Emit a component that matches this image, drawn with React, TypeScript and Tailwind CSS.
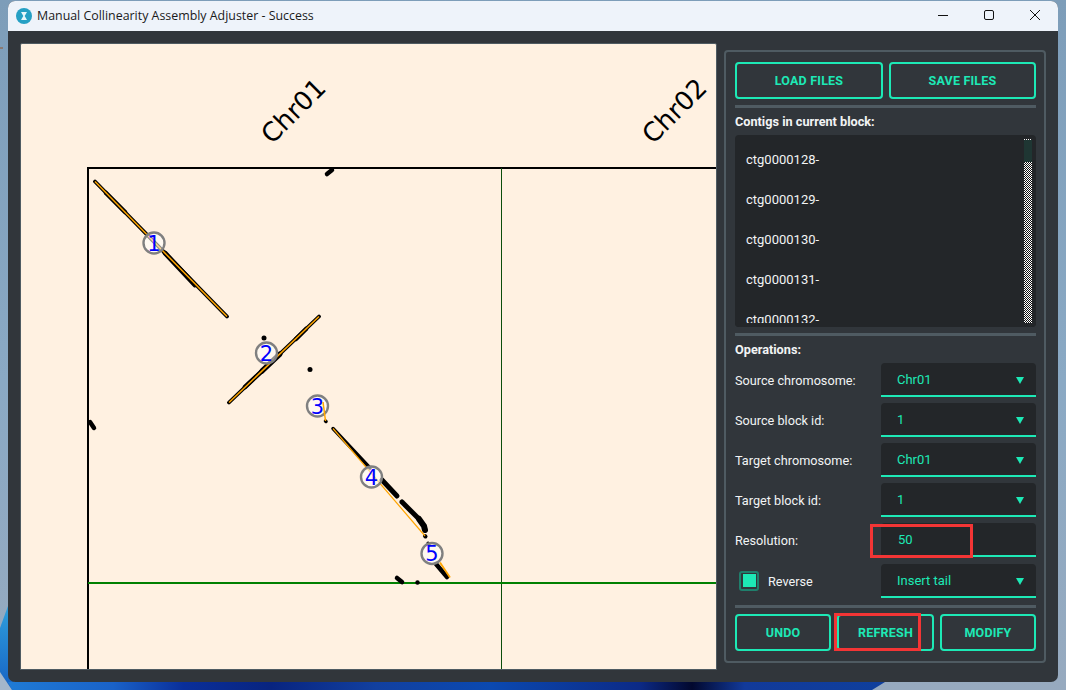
import { useState } from 'react'

const contigs = ['ctg0000128-', 'ctg0000129-', 'ctg0000130-', 'ctg0000131-', 'ctg0000132-']

function ActionButton({ label, className }: { label: string; className: string }) {
  return (
    <button className={`h-[37px] rounded-[4px] border-2 border-[#1de9b6] pt-[2px] font-['Roboto',sans-serif] text-[12.5px] font-bold tracking-[0.2px] text-[#1de9b6] ${className}`}>
      {label}
    </button>
  )
}

function Divider() {
  return <div className="h-[3px] bg-[#4f5b62]" />
}

function Select({ value }: { value: string }) {
  return (
    <div className="flex h-[34px] w-[155px] items-center justify-between rounded-t-[4px] border-b-2 border-[#1de9b6] bg-[#232629] pt-[2px] pl-4 pr-[12px] text-[13px] text-[#1de9b6]">
      <span>{value}</span>
      <svg width="8" height="7" viewBox="0 0 8 7"><path d="M0 0h8L4 7z" fill="#1de9b6" /></svg>
    </div>
  )
}

function FieldRow({ label, value }: { label: string; value: string }) {
  return (
    <div className="flex items-center justify-between">
      <span className="pt-[2px] text-[12.7px] text-[#f2f4f5]">{label}</span>
      <Select value={value} />
    </div>
  )
}

function Plot() {
  return (
    <svg width="697" height="627" viewBox="20 43 697 627" className="block" fontFamily="'DejaVu Sans', sans-serif">
      <text x="272" y="145" fontSize="26" transform="rotate(-45 272 145)" fill="#000">Chr01</text>
      <text x="653" y="145" fontSize="26" transform="rotate(-45 653 145)" fill="#000">Chr02</text>

      <path d="M88 670V168H717" fill="none" stroke="#000" strokeWidth="2" />
      <path d="M501.500 168V670" stroke="#0b4d0b" strokeWidth="1" />
      <path d="M88 583H717" stroke="#008000" strokeWidth="2" />

      {/* black dot traces */}
      <g stroke="#000" fill="none" strokeLinecap="round">
        <path d="M95 181.500L227 316.500" strokeWidth="3.800" />
        <path d="M106 193L125 212" strokeWidth="4.500" />
        <path d="M165 253L195 285" strokeWidth="4.800" />
        <path d="M229 402.500L319 316.500" strokeWidth="3.800" />
        <path d="M245 387L262 371" strokeWidth="4.500" />
        <path d="M262 371L280 354" strokeWidth="5.200" />
        <path d="M296 339L306 329" strokeWidth="4.500" />
        <path d="M333 428.500L370 468" strokeWidth="3.500" />
        <path d="M382 480L397 496" strokeWidth="5" />
        <path d="M402 502L417 517" strokeWidth="5" />
        <path d="M419 519L424 526L425 530" strokeWidth="6" />
        <path d="M425 536L425.500 536.500" strokeWidth="4" />
        <path d="M428 543L429 545" strokeWidth="3" />
        <path d="M436 564L447 577" strokeWidth="4.500" />
        <path d="M327 174L332 170" strokeWidth="4.500" />
        <path d="M90 422L94 428" strokeWidth="4.500" />
        <path d="M397 578L402 582" strokeWidth="4.500" />
        <path d="M325.500 421L326 421.500" strokeWidth="3.500" />
      </g>
      <g fill="#000">
        <circle cx="264" cy="338" r="2.500" />
        <circle cx="310" cy="369.500" r="2.500" />
        <circle cx="417.500" cy="582.500" r="2.200" />
      </g>

      {/* orange fitted lines */}
      <g stroke="#ffa500" fill="none">
        <path d="M95 181.500L227 316.500" strokeWidth="1.500" />
        <path d="M229 402.500L319 316.500" strokeWidth="1.500" />
        <path d="M333 428.500L425 536" strokeWidth="1.200" />
        <path d="M440 562.500L450 577.500" strokeWidth="1.800" />
      </g>

      {/* block markers */}
      {[
        { n: 1, x: 154, y: 243 },
        { n: 2, x: 266.500, y: 353 },
        { n: 3, x: 317.500, y: 406 },
        { n: 4, x: 371.500, y: 477 },
        { n: 5, x: 432, y: 553.500 },
      ].map((m) => (
        <g key={m.n}>
          <circle cx={m.x} cy={m.y} r="10.500" fill="#ffffff" fillOpacity="0.55" stroke="#808080" strokeWidth="2.400" />
          <text x={m.x} y={m.y + 7.500} fontSize="21" fill="#0000ff" textAnchor="middle">{m.n}</text>
        </g>
      ))}
      <path d="M323 402L325.500 421" stroke="#ffa500" strokeWidth="1.500" fill="none" />
    </svg>
  )
}

export default function App() {
  const [reverse] = useState(true)

  return (
    <div className="relative h-[690px] w-[1066px] overflow-hidden bg-[linear-gradient(180deg,#7d9db9_0%,#8aa9c4_55%,#97aabf_100%)] pl-2 pt-px">
      {/* desktop wallpaper peeking out under the window */}
      <svg className="absolute inset-0" width="1066" height="690" viewBox="0 0 1066 690">
        <defs>
          <linearGradient id="edge" x1="0" y1="0" x2="0" y2="1">
            <stop offset="0" stopColor="#2f9fdc" />
            <stop offset="1" stopColor="#1662c4" />
          </linearGradient>
          <linearGradient id="strip" x1="0" y1="0" x2="1" y2="0">
            <stop offset="0" stopColor="#1f7bd6" />
            <stop offset="0.12" stopColor="#1a62c8" />
            <stop offset="0.2" stopColor="#0a2f9a" />
            <stop offset="0.3" stopColor="#08247f" />
            <stop offset="0.42" stopColor="#12409f" />
            <stop offset="0.55" stopColor="#0b49b0" />
            <stop offset="0.72" stopColor="#0c2a86" />
            <stop offset="0.78" stopColor="#02082e" />
            <stop offset="0.84" stopColor="#123a9a" />
            <stop offset="1" stopColor="#0f3f9c" />
          </linearGradient>
        </defs>
        <path d="M0 628L8 606H14V690H0z" fill="url(#edge)" />
        <path d="M8 682H885L872 690H12z" fill="url(#strip)" />
        <path d="M0 672L12 690H0z" fill="#a3b6cb" />
        <path d="M0 47h3v2H0z" fill="#8a7a72" />
      </svg>

      <div className="relative flex h-[681px] w-[1050px] flex-col overflow-hidden rounded-[7px] bg-[#31363b] font-['Roboto',sans-serif]">
        {/* title bar */}
        <div className="flex h-[30px] shrink-0 items-center bg-[#eef3fa] pl-2">
          <svg width="16" height="16" viewBox="0 0 16 16">
            <circle cx="8" cy="8" r="8" fill="#25a0c4" />
            <path d="M5 4h6L8.700 8 11 12H5l2.300-4z" fill="#e6f6fa" />
          </svg>
          <span className="ml-[5px] font-['Open_Sans',sans-serif] text-[12.4px] text-[#1a1a1a]">
            Manual Collinearity Assembly Adjuster - Success
          </span>
          <div className="ml-auto flex items-center">
            <svg width="46" height="30" viewBox="0 0 46 30"><path d="M18 14.500h10" stroke="#111" strokeWidth="1" /></svg>
            <svg width="46" height="30" viewBox="0 0 46 30"><rect x="18.500" y="9.500" width="9" height="9" rx="1.500" fill="none" stroke="#111" strokeWidth="1" /></svg>
            <svg width="46" height="30" viewBox="0 0 46 30"><path d="M18 9l10 10M28 9l-10 10" stroke="#111" strokeWidth="1" /></svg>
          </div>
        </div>

        {/* body */}
        <div className="flex min-h-0 flex-1 items-start pl-3 pt-3">
          <div className="h-[627px] w-[697px] overflow-hidden rounded-t-[2px] border-x border-y border-[#4f5b62] bg-[#fff1e1]">
            <div className="-m-px"><Plot /></div>
          </div>

          <div className="relative ml-[7px] mt-[7px] flex h-[613px] w-[322px] flex-col rounded-[4px] border-2 border-[#4f5b62] pl-[9px] pr-2 pt-[10px] text-[#f2f4f5]">
            <div className="flex gap-[6px]">
              <ActionButton label="LOAD FILES" className="w-[148px]" />
              <ActionButton label="SAVE FILES" className="w-[147px]" />
            </div>
            <div className="mt-[6px]"><Divider /></div>
            <div className="mt-[6px] text-[12.7px] leading-[15px] font-bold">Contigs in current block:</div>
            <div className="relative mt-[6px] h-[192px] overflow-hidden rounded-[4px] bg-[#232629] py-1 pl-[11px] pr-3">
              {contigs.map((c) => (
                <div key={c} className="h-10 pt-[13px] text-[13px] leading-[15px] text-[#f2f4f5]">{c}</div>
              ))}
              <div className="absolute top-1 right-1 flex h-[184px] w-2 flex-col">
                <div className="h-px bg-[repeating-linear-gradient(90deg,#fff_0_1px,#232629_1px_2px)]" />
                <div className="h-[22px] bg-[#1f3633]" />
                <div className="flex-1 bg-[repeating-conic-gradient(#ffffff_0_25%,#111111_0_50%)] bg-[length:2px_2px]" />
              </div>
              <div className="absolute inset-x-0 bottom-0 h-[4px] bg-[#232629]" />
            </div>
            <div className="mt-[6px]"><Divider /></div>
            <div className="mt-[6px] text-[12.7px] leading-[15px] font-bold">Operations:</div>
            <div className="mt-[6px] flex flex-col gap-[6px]">
              <FieldRow label="Source chromosome:" value="Chr01" />
              <FieldRow label="Source block id:" value="1" />
              <FieldRow label="Target chromosome:" value="Chr01" />
              <FieldRow label="Target block id:" value="1" />
              <div className="flex items-center justify-between">
                <span className="pt-[2px] text-[12.7px]">Resolution:</span>
                <div className="flex h-[34px] w-[155px] items-center rounded-t-[4px] border-b-2 border-[#1de9b6] bg-[#232629] pt-[2px] pl-[17px] text-[13px] text-[#1de9b6]">50</div>
              </div>
              <div className="mt-px flex items-center justify-between">
                <div className="flex items-center pl-[4px]">
                  <div className="flex h-5 w-5 items-center justify-center rounded-[3px] border-2 border-[#1f7f6c]">
                    {reverse && <div className="h-[13px] w-[13px] bg-[#1de9b6]" />}
                  </div>
                  <span className="ml-[9px] pt-[2px] text-[12.7px]">Reverse</span>
                </div>
                <Select value="Insert tail" />
              </div>
            </div>
            <div className="mt-[7px]"><Divider /></div>
            <div className="mt-[6px] flex gap-[6px]">
              <ActionButton label="UNDO" className="w-[96px]" />
              <ActionButton label="REFRESH" className="w-[97px]" />
              <ActionButton label="MODIFY" className="w-[96px]" />
            </div>

            {/* red annotation boxes drawn over the screenshot */}
            <div className="pointer-events-none absolute top-[472px] left-[144px] h-[34px] w-[103px] border-[3px] border-[#f33535]" />
            <div className="pointer-events-none absolute top-[561px] left-[108px] h-[38px] w-[87px] border-[3px] border-[#f33535]" />
          </div>
        </div>
      </div>
    </div>
  )
}
